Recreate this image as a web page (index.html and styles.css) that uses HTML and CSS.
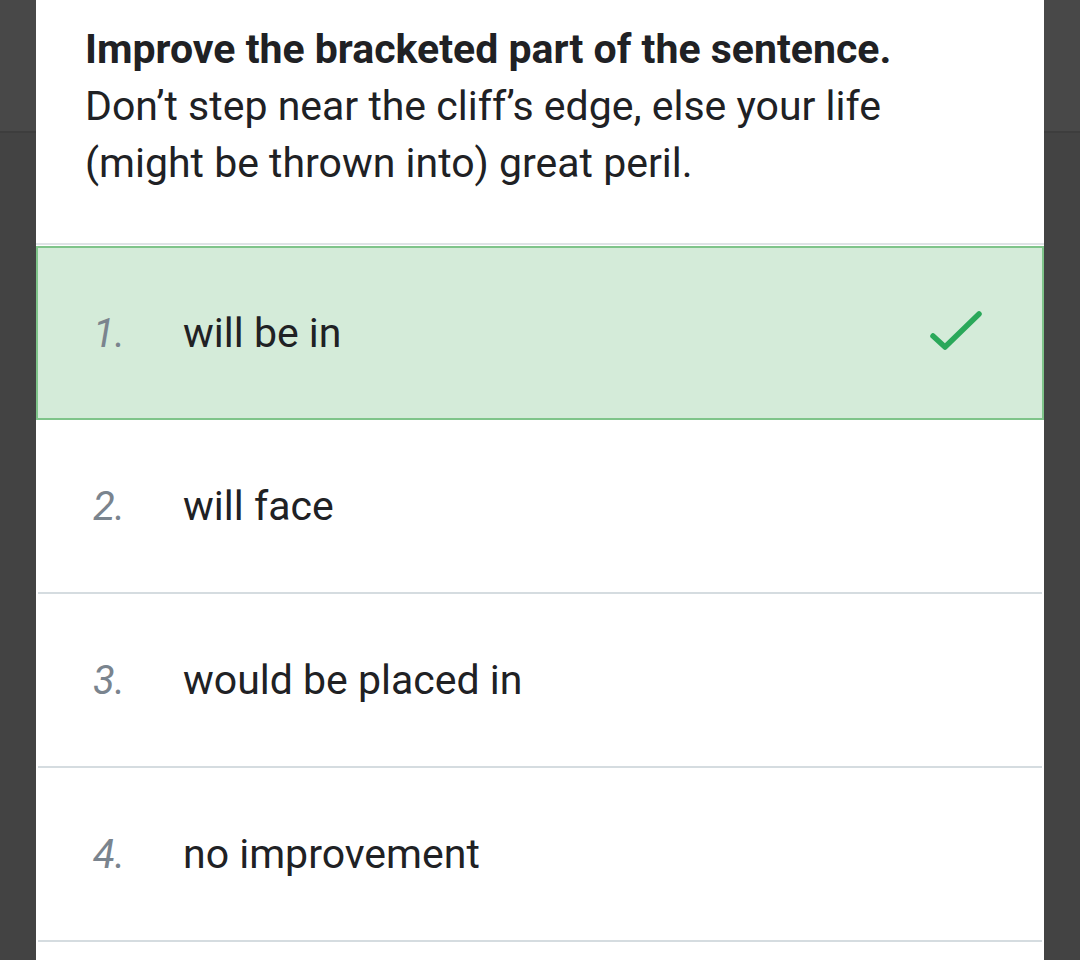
FILE: index.html
```html
<!DOCTYPE html>
<html lang="en">
<head>
<meta charset="utf-8">
<title>Question</title>
<link rel="stylesheet" href="styles.css">
</head>
<body>
<div class="backdrop">
  <div class="side side-left"><div class="band"></div></div>
  <main class="card">
    <div class="question">
      <p class="prompt">Improve the bracketed part of the sentence.</p>
      <p class="sentence">Don’t step near the cliff’s edge, else your life (might be thrown into) great peril.</p>
    </div>
    <ol class="options">
      <li class="option selected">
        <span class="num">1.</span>
        <span class="text">will be in</span>
        <svg class="check" width="58" height="46" viewBox="0 0 58 46" aria-hidden="true">
          <path d="M5 28 L17 39 L51 6" fill="none" stroke="#2aa85a" stroke-width="5.5" stroke-linecap="round" stroke-linejoin="round"/>
        </svg>
      </li>
      <li class="option"><span class="num">2.</span><span class="text">will face</span></li>
      <li class="option"><span class="num">3.</span><span class="text">would be placed in</span></li>
      <li class="option"><span class="num">4.</span><span class="text">no improvement</span></li>
    </ol>
  </main>
  <div class="side side-right"><div class="band"></div></div>
</div>
</body>
</html>
```

FILE: styles.css
```css
html, body {
  margin: 0;
  padding: 0;
  height: 100%;
  overflow: hidden;
}
body {
  background: #434343;
  font-family: Roboto, "Noto Sans", sans-serif;
  color: #212121;
}
.backdrop {
  display: flex;
  height: 960px;
}
.side {
  width: 36px;
  flex: none;
}
.band {
  height: 131px;
  background: #484848;
  border-bottom: 2px solid #3d3d3d;
}
.card {
  flex: 1;
  background: #ffffff;
}
.question {
  padding: 21px 49px 0 49px;
}
.question p {
  margin: 0;
  font-size: 41px;
  line-height: 57px;
  color: #202124;
}
.prompt {
  font-weight: 700;
}
.sentence {
  padding-right: 80px;
}
.options {
  list-style: none;
  margin: 51px 0 0 0;
  padding: 0;
  border-top: 2px solid #dfe3e6;
}
.option {
  display: flex;
  align-items: center;
  height: 172px;
  margin: 0 2px;
  border-bottom: 2px solid #d5dce0;
  padding: 0 56px 0 55px;
}
.option.selected {
  height: 170px;
  margin: 1px 0 0 0;
  background: #d4ebd9;
  border: 2px solid #7fc48a;
  padding: 0 56px 0 55px;
}
.num {
  width: 90px;
  flex: none;
  font-size: 40px;
  font-style: italic;
  color: #7a848e;
}
.text {
  flex: 1;
  font-size: 41px;
  color: #202124;
}
.check {
  flex: none;
  margin-top: -4px;
}
```
